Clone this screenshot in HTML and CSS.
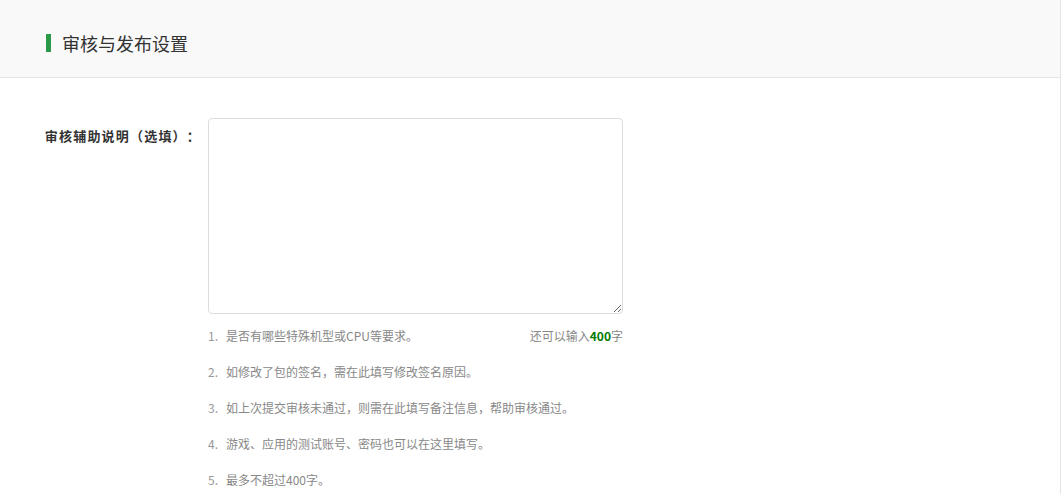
FILE: index.html
```html
<!DOCTYPE html>
<html lang="zh-CN">
<head>
    <meta charset="UTF-8">
    <title>审核与发布设置</title>
    <link rel="stylesheet" href="styles.css">
</head>
<body>
    <div class="panel">
        <div class="panel-head">
            <span class="head-bar"></span>
            <h2>审核与发布设置</h2>
        </div>
        <div class="panel-body">
            <div class="form-row">
                <label class="form-label" for="auditNote">审核辅助说明（选填）：</label>
                <div class="form-field">
                    <textarea id="auditNote" maxlength="400"></textarea>
                    <div class="hint-box">
                        <ol class="hints">
                            <li><span class="num">1.</span>是否有哪些特殊机型或CPU等要求。</li>
                            <li><span class="num">2.</span>如修改了包的签名，需在此填写修改签名原因。</li>
                            <li><span class="num">3.</span>如上次提交审核未通过，则需在此填写备注信息，帮助审核通过。</li>
                            <li><span class="num">4.</span>游戏、应用的测试账号、密码也可以在这里填写。</li>
                            <li><span class="num">5.</span>最多不超过400字。</li>
                        </ol>
                        <div class="counter">还可以输入<b id="left">400</b>字</div>
                    </div>
                </div>
            </div>
        </div>
    </div>

    <script>
        // update remaining characters
        const note = document.getElementById('auditNote');
        note.addEventListener('input', function() {
            document.getElementById('left').textContent = 400 - this.value.length;
        });
    </script>
</body>
</html>
```

FILE: styles.css
```css
body {
    margin: 0;
    font-family: "Noto Sans CJK SC", "Liberation Sans", sans-serif;
    background-color: #fff;
    color: #333;
}

.panel {
    border-right: 1px solid #e4e4e4;
    height: 494px;
    overflow: hidden;
}

.panel-head {
    background-color: #f9f9f9;
    border-bottom: 1px solid #e4e4e4;
    display: flex;
    align-items: center;
    padding-left: 46px;
    box-sizing: border-box;
    height: 78px;
    padding-top: 8px;
}

.head-bar {
    width: 5px;
    height: 18px;
    background-color: #2b9a48;
    margin-right: 11px;
}

.panel-head h2 {
    margin: 0;
    font-size: 18px;
    font-weight: normal;
    color: #333;
    line-height: 20px;
}

.panel-body {
    padding-top: 40px;
}

.form-row {
    display: flex;
}

.form-label {
    width: 201px;
    text-align: right;
    padding-top: 9px;
    padding-right: 7px;
    font-size: 13px;
    font-weight: bold;
    color: #333;
    line-height: 18px;
    text-spacing-trim: space-all;
    letter-spacing: 1.2px;
}

.form-field {
    width: 415px;
}

textarea {
    display: block;
    width: 415px;
    height: 196px;
    box-sizing: border-box;
    border: 1px solid #dcdcdc;
    border-radius: 4px;
    padding: 6px 8px;
    font-family: inherit;
    font-size: 13px;
    resize: vertical;
    margin: 0;
}

.hint-box {
    position: relative;
    padding-top: 4px;
}

.hints {
    list-style: none;
    margin: 0;
    padding: 0;
}

.hints li {
    font-size: 12px;
    line-height: 36px;
    color: #888;
}

.hints .num {
    display: inline-block;
    width: 18px;
    color: #999;
}

.counter {
    position: absolute;
    top: 4px;
    right: 0;
    font-size: 12px;
    line-height: 36px;
    color: #888;
}

.counter b {
    color: #007a00;
}
```
